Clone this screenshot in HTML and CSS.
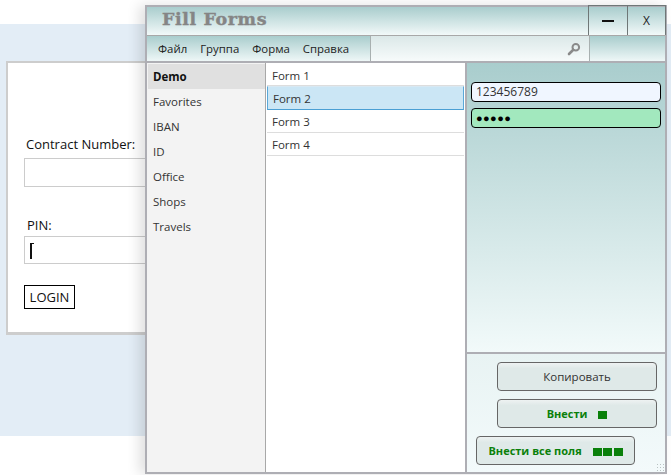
FILE: index.html
```html
<!DOCTYPE html>
<html lang="ru">
<head>
    <meta charset="UTF-8">
    <meta name="viewport" content="width=device-width, initial-scale=1.0">
    <title>Fill Forms</title>
    <link rel="stylesheet" href="styles.css">
</head>
<body>
    <div class="band">
        <div class="card">
            <label class="field-label">Contract Number:</label>
            <div class="field"></div>
            <label class="field-label pin-label">PIN:</label>
            <div class="field pin-field"><span class="caret"></span></div>
            <div class="login">LOGIN</div>
        </div>
    </div>

    <div class="window">
        <div class="titlebar">
            <div class="title">Fill Forms</div>
            <div class="win-btn"><span class="min-bar"></span></div>
            <div class="win-btn close">X</div>
        </div>
        <div class="menubar">
            <div class="menu">
                <span>Файл</span>
                <span>Группа</span>
                <span>Форма</span>
                <span>Справка</span>
            </div>
            <div class="search">
                <svg width="14" height="14" viewBox="0 0 14 14">
                    <circle cx="8.8" cy="5.2" r="3.3" fill="none" stroke="#8a8a8a" stroke-width="2"/>
                    <path d="M6.3 7.8 L2 12" stroke="#8a8a8a" stroke-width="2.6" stroke-linecap="round"/>
                </svg>
            </div>
            <div class="menu-end"></div>
        </div>
        <div class="content">
            <div class="groups">
                <div class="group active">Demo</div>
                <div class="group">Favorites</div>
                <div class="group">IBAN</div>
                <div class="group">ID</div>
                <div class="group">Office</div>
                <div class="group">Shops</div>
                <div class="group">Travels</div>
            </div>
            <div class="forms">
                <div class="form-row">Form 1</div>
                <div class="form-row selected">Form 2</div>
                <div class="form-row">Form 3</div>
                <div class="form-row">Form 4</div>
            </div>
            <div class="side">
                <div class="values">
                    <div class="value">123456789</div>
                    <div class="value secret">●●●●●</div>
                </div>
                <div class="actions">
                    <div class="btn">Копировать</div>
                    <div class="btn green">Внести <span class="mark"><i></i></span></div>
                    <div class="btn green all">Внести все поля <span class="mark"><i></i><i></i><i></i></span></div>
                    <div class="grip"></div>
                </div>
            </div>
        </div>
    </div>
</body>
</html>
```

FILE: styles.css
```css
html, body {
    margin: 0;
    height: 475px;
    overflow: hidden;
}
body {
    background-color: #fff;
    font-family: "Open Sans", "Noto Sans", sans-serif;
    font-size: 12px;
    color: #222;
    padding-top: 24px;
    box-sizing: border-box;
}
.band {
    background-color: #e3edf6;
    height: 412px;
    padding: 37px 0 0 6px;
    box-sizing: border-box;
}
.card {
    background-color: #fff;
    border: 2px solid #cdcdcd;
    border-bottom-width: 3px;
    width: 300px;
    height: 274px;
    box-sizing: border-box;
    padding: 72px 0 0 16px;
}
.field-label {
    display: block;
    font-size: 13px;
    line-height: 18px;
    padding-left: 2px;
    color: #111;
}
.pin-label {
    margin-top: 29px;
    padding-left: 3px;
}
.field {
    border: 1px solid #ccc;
    height: 29px;
    margin-top: 5px;
    box-sizing: border-box;
}
.pin-field {
    height: 28px;
    margin-top: 2px;
    padding: 6px 0 0 5px;
}
.caret {
    display: block;
    width: 2px;
    height: 16px;
    background-color: #111;
    position: relative;
}
.caret::after {
    content: "";
    position: absolute;
    left: 0;
    top: 0;
    width: 4px;
    height: 1px;
    background-color: #111;
}
.login {
    border: 1px solid #000;
    width: 51px;
    height: 24px;
    line-height: 22px;
    margin-top: 21px;
    text-align: center;
    font-size: 13px;
    color: #111;
    box-sizing: border-box;
}

/* окно приложения */
.window {
    position: absolute;
    left: 145px;
    top: 5px;
    width: 522px;
    height: 469px;
    box-sizing: border-box;
    border: 2px solid #aeaeb4;
    background-color: #fff;
    box-shadow: -6px 0 12px rgba(0, 0, 0, 0.12);
    display: flex;
    flex-direction: column;
}
.titlebar {
    height: 28px;
    display: flex;
    background: linear-gradient(#a9cdcd, #f2f9f9);
    border-bottom: 1px solid #a8a8a8;
    flex: none;
}
.title {
    flex: 1;
    padding-left: 15px;
    font-family: "DejaVu Serif", serif;
    font-weight: bold;
    font-size: 17.5px;
    line-height: 25px;
    letter-spacing: 0.6px;
    color: #858585;
    -webkit-text-stroke: 0.4px #858585;
}
.win-btn {
    width: 39px;
    box-sizing: border-box;
    margin-top: -2px;
    border-left: 1px solid #6f7777;
    border-top: 1px solid #6f7777;
    display: flex;
    align-items: center;
    justify-content: center;
    font-size: 12px;
    color: #222;
}
.close {
    margin-right: -1px;
    border-right: 1px solid #6f7777;
}
.min-bar {
    width: 12px;
    height: 2px;
    background-color: #111;
}
.menubar {
    height: 25px;
    display: flex;
    flex: none;
    border-bottom: 2px solid #aeaeb4;
    box-sizing: content-box;
}
.menu {
    width: 224px;
    box-sizing: border-box;
    padding-left: 11px;
    display: flex;
    gap: 13px;
    align-items: center;
    background: linear-gradient(#a9cdcd, #eef7f7);
    border-right: 1px solid #a8b0b0;
    color: #222;
    font-size: 11.4px;
}
.search {
    width: 219px;
    box-sizing: border-box;
    padding-right: 8px;
    display: flex;
    align-items: center;
    justify-content: flex-end;
    background: linear-gradient(#dbe8e8, #f7fbfb);
    border-right: 1px solid #a8b0b0;
}
.menu-end {
    flex: 1;
    background: linear-gradient(#a9cdcd, #eef7f7);
}
.content {
    flex: 1;
    display: flex;
    min-height: 0;
}
.groups {
    width: 119px;
    flex: none;
    box-sizing: border-box;
    padding: 1px 0 0 1px;
    background-color: #f3f3f3;
    border-right: 1px solid #a8a8a8;
}
.group {
    height: 25px;
    line-height: 25px;
    padding-left: 5px;
    font-size: 11.5px;
    color: #333;
}
.group.active {
    background-color: #e0e0e0;
    font-weight: bold;
    color: #111;
}
.forms {
    width: 201px;
    flex: none;
    box-sizing: border-box;
    padding: 2px 1px 0 1px;
    border-right: 2px solid #aeaeb4;
}
.form-row {
    height: 23px;
    line-height: 23px;
    padding-left: 5px;
    border-bottom: 1px solid #ddd;
    box-sizing: border-box;
    font-size: 11.5px;
    color: #333;
}
.form-row:first-child {
    height: 21px;
    line-height: 22px;
}
.form-row.selected {
    height: 24px;
    line-height: 23px;
    background-color: #cbe6f5;
    border: 1px solid #d8e8f2;
    border-left-color: #5aa8d8;
    border-right-color: #5aa8d8;
    border-bottom-color: #4a9fd4;
}
.side {
    flex: 1;
    display: flex;
    flex-direction: column;
    min-width: 0;
}
.values {
    height: 291px;
    flex: none;
    box-sizing: border-box;
    padding: 19px 4px 0 4px;
    background: linear-gradient(#a9cdcd, #f2fafa);
    border-bottom: 2px solid #aeaeb4;
}
.value {
    height: 20px;
    line-height: 18px;
    box-sizing: border-box;
    border: 1px solid #000;
    border-radius: 4px;
    background-color: #f0f6ff;
    padding-left: 4px;
    margin-bottom: 6px;
    color: #333;
    font-size: 12px;
}
.value.secret {
    background-color: #a2e8be;
    color: #000;
    font-size: 11px;
    letter-spacing: 0.4px;
    padding-left: 4px;
}
.actions {
    flex: 1;
    position: relative;
    box-sizing: border-box;
    padding-top: 8px;
    background: linear-gradient(#e8f3f3, #f3fafb);
    display: flex;
    flex-direction: column;
    align-items: flex-end;
    gap: 8px;
}
.btn {
    width: 160px;
    height: 29px;
    box-sizing: border-box;
    margin-right: 8px;
    border: 1px solid #666;
    border-radius: 4px;
    background: linear-gradient(#eef2f2 0, #dfe9e8 20%, #dfe9e8 100%);
    text-align: center;
    line-height: 27px;
    font-size: 11.5px;
    color: #333;
}
.btn.green {
    font-weight: bold;
    font-size: 11px;
    color: #0a800a;
}
.btn.all {
    width: 159px;
    margin-right: 30px;
}
.mark {
    display: inline-flex;
    gap: 1.5px;
    margin-left: 8px;
    vertical-align: -1px;
}
.mark i {
    display: block;
    width: 9px;
    height: 8px;
    background-color: #0a800a;
}
.grip {
    position: absolute;
    right: 0;
    bottom: 0;
    width: 9px;
    height: 9px;
    background-image: radial-gradient(#b9c3c3 1px, transparent 1px);
    background-size: 3px 3px;
}
```
